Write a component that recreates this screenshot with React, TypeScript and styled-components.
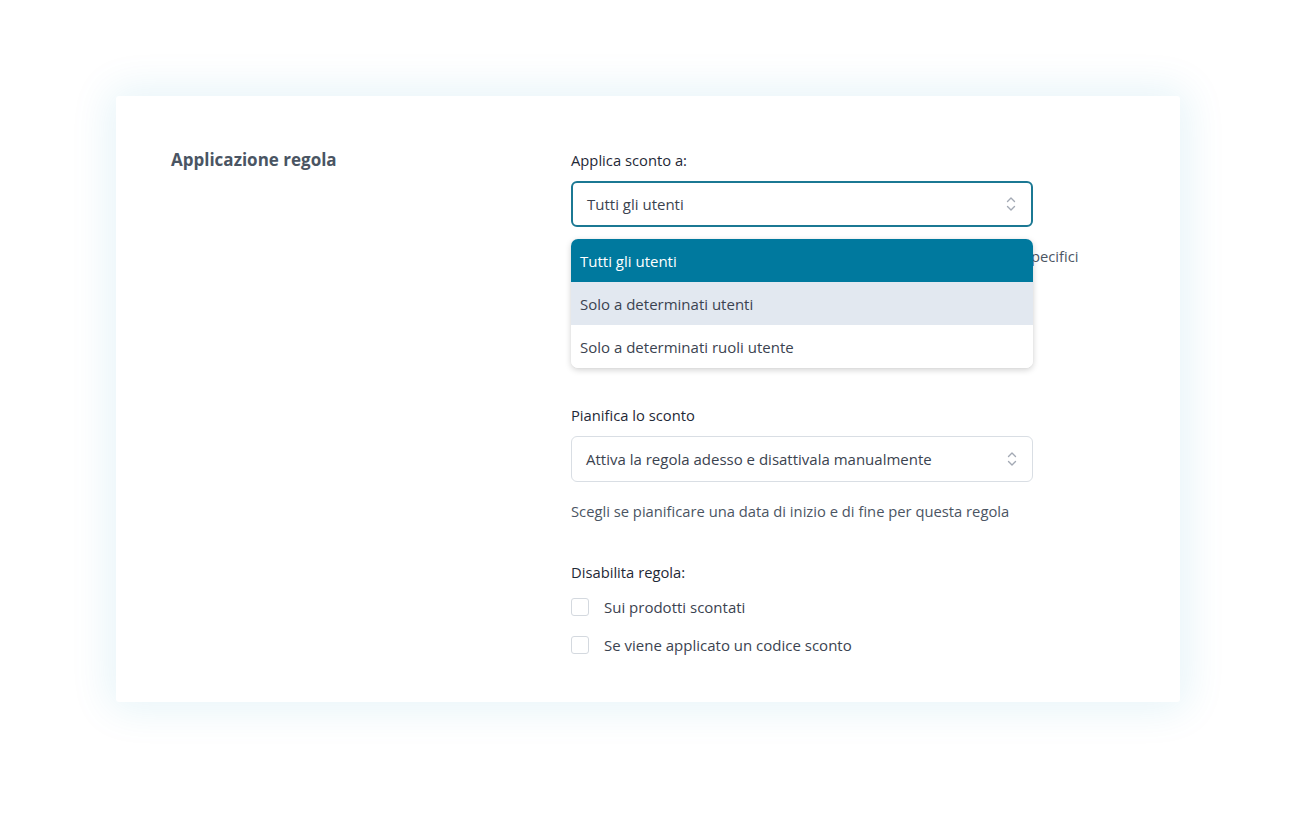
import React from "react";
import styled, { createGlobalStyle } from "styled-components";

const GlobalStyle = createGlobalStyle`
  html, body {
    margin: 0;
    padding: 0;
    background: #ffffff;
    font-family: "Open Sans", "Noto Sans", sans-serif;
    color: #1f2937;
  }
  * { box-sizing: border-box; }
`;

const Page = styled.div`
  width: 1300px;
  height: 813px;
  padding: 96px 0 0 116px;
`;

const Card = styled.section`
  width: 1064px;
  background: #fff;
  border-radius: 3px;
  box-shadow: 0 0 42px 6px rgba(20, 150, 190, 0.11);
  padding: 54px 0 47px 55px;
  display: grid;
  grid-template-columns: 400px 462px;
`;

const Title = styled.h2`
  margin: 0;
  font-size: 17px;
  line-height: 20px;
  font-weight: 700;
  color: #4a5563;
`;

const Column = styled.div`
  display: flex;
  flex-direction: column;
`;

const Field = styled.div<{ $gap: number }>`
  position: relative;
  display: flex;
  flex-direction: column;
  margin-bottom: ${({ $gap }) => $gap}px;
`;

const Label = styled.div`
  font-size: 14.75px;
  line-height: 20px;
  color: #1f2937;
  margin-bottom: 11px;
`;

const Select = styled.div<{ $focused?: boolean }>`
  height: 46px;
  border-radius: 6px;
  border: ${({ $focused }) => ($focused ? "2px solid #1b7893" : "1px solid #d9dee4")};
  padding: 0 14px;
  display: flex;
  align-items: center;
  justify-content: space-between;
  font-size: 15px;
  color: #3b434f;
  background: #fff;
`;

const Helper = styled.p`
  margin: 19px 0 0;
  font-size: 14.75px;
  line-height: 20px;
  color: #4b5563;
  white-space: nowrap;
`;

const Menu = styled.ul`
  position: absolute;
  top: 89px;
  left: 0;
  width: 462px;
  margin: 0;
  padding: 0;
  list-style: none;
  background: #fff;
  border-radius: 7px;
  overflow: hidden;
  box-shadow: 0 2px 6px rgba(0, 0, 0, 0.18), 0 0 1px rgba(0, 0, 0, 0.1);
`;

const Option = styled.li<{ $state?: "active" | "hover" }>`
  height: 43px;
  padding: 0 9px;
  display: flex;
  align-items: center;
  font-size: 15px;
  color: ${({ $state }) => ($state === "active" ? "#ffffff" : "#3b4350")};
  background: ${({ $state }) =>
    $state === "active" ? "#00799e" : $state === "hover" ? "#e2e8f0" : "#ffffff"};
`;

const CheckRow = styled.label`
  display: flex;
  align-items: center;
  gap: 15px;
  height: 20px;
  margin-top: 18px;
  font-size: 15px;
  color: #3b4350;
  &:first-of-type { margin-top: 4px; }
`;

const Box = styled.span`
  width: 18px;
  height: 18px;
  border: 1px solid #d4d9df;
  border-radius: 3px;
  background: #fff;
`;

const Chevron = () => (
  <svg width="12" height="18" viewBox="0 0 12 18" fill="none" stroke="#a3a9b4" strokeWidth="1.4" strokeLinecap="round" strokeLinejoin="round">
    <path d="M2.5 6.5 6 3l3.5 3.5" />
    <path d="M2.5 11.5 6 15l3.5-3.5" />
  </svg>
);

export default function App() {
  return (
    <>
      <GlobalStyle />
      <Page>
        <Card>
          <Title>Applicazione regola</Title>
          <Column>
            <Field $gap={139}>
              <Label>Applica sconto a:</Label>
              <Select $focused>
                <span>Tutti gli utenti</span>
                <Chevron />
              </Select>
              <Helper>Scegli se applicare lo sconto a tutti gli utenti o solo a singoli utenti specifici</Helper>
              <Menu>
                <Option $state="active">Tutti gli utenti</Option>
                <Option $state="hover">Solo a determinati utenti</Option>
                <Option>Solo a determinati ruoli utente</Option>
              </Menu>
            </Field>
            <Field $gap={41}>
              <Label>Pianifica lo sconto</Label>
              <Select>
                <span>Attiva la regola adesso e disattivala manualmente</span>
                <Chevron />
              </Select>
              <Helper>Scegli se pianificare una data di inizio e di fine per questa regola</Helper>
            </Field>
            <Field $gap={0}>
              <Label>Disabilita regola:</Label>
              <CheckRow>
                <Box />
                Sui prodotti scontati
              </CheckRow>
              <CheckRow>
                <Box />
                Se viene applicato un codice sconto
              </CheckRow>
            </Field>
          </Column>
        </Card>
      </Page>
    </>
  );
}
